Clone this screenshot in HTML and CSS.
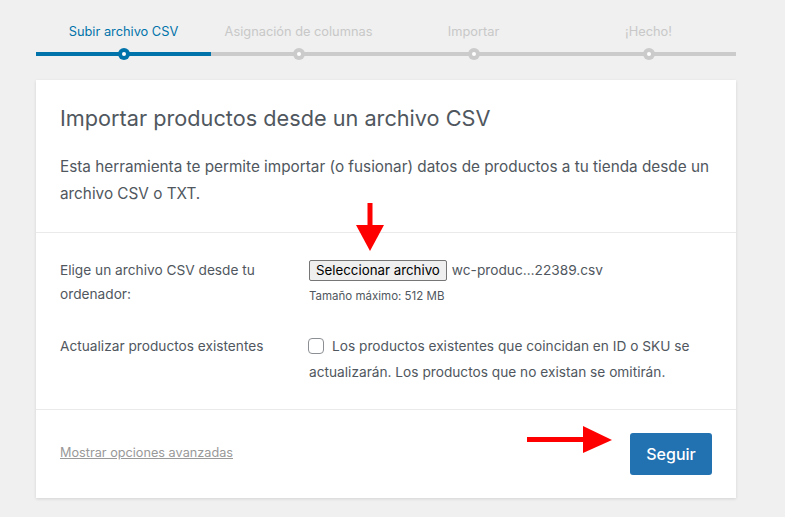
FILE: index.html
```html
<!DOCTYPE html>
<html lang="es">
<head>
<meta charset="utf-8">
<title>Importar productos</title>
<link rel="stylesheet" href="styles.css">
</head>
<body>
<div class="wrap">
  <ol class="steps">
    <li class="active">Subir archivo CSV</li>
    <li>Asignación de columnas</li>
    <li>Importar</li>
    <li>¡Hecho!</li>
  </ol>
  <form class="card">
    <header class="card-head">
      <h2>Importar productos desde un archivo CSV</h2>
      <p>Esta herramienta te permite importar (o fusionar) datos de productos a tu tienda desde un archivo CSV o TXT.</p>
    </header>
    <section class="card-body">
      <div class="row">
        <div class="label">Elige un archivo CSV desde tu ordenador:</div>
        <div class="field">
          <div class="file">
            <button type="button" class="file-btn">Seleccionar archivo</button>
            <span class="file-name">wc-produc…22389.csv</span>
          </div>
          <small class="hint">Tamaño máximo: 512 MB</small>
        </div>
      </div>
      <div class="row row-2">
        <div class="label">Actualizar productos existentes</div>
        <div class="field check-text"><span class="checkbox"></span>Los productos existentes que coincidan en ID o SKU se actualizarán. Los productos que no existan se omitirán.</div>
      </div>
    </section>
    <footer class="card-foot">
      <a class="adv" href="#">Mostrar opciones avanzadas</a>
      <button type="button" class="primary">Seguir</button>
    </footer>
    <svg class="arrow arrow-down" width="30" height="50" viewBox="0 0 30 50"><rect x="11.5" y="0" width="5" height="23" fill="#ff0000"/><polygon points="0,22 28,22 14,48" fill="#ff0000"/></svg>
    <svg class="arrow arrow-right" width="90" height="30" viewBox="0 0 90 30"><rect x="0" y="11" width="58" height="5" fill="#ff0000"/><polygon points="56,0 56,27 85,14" fill="#ff0000"/></svg>
  </form>
</div>
</body>
</html>
```

FILE: styles.css
```css
* { box-sizing: border-box; }
html, body { margin: 0; padding: 0; }
body {
  background: #f0f0f0;
  font-family: Inter, "Noto Sans", sans-serif;
  color: #50575e;
  width: 785px;
  height: 517px;
  overflow: hidden;
}
.wrap {
  width: 700px;
  margin-left: 36px;
  padding-top: 22px;
}
.steps {
  list-style: none;
  margin: 0;
  padding: 0;
  display: grid;
  grid-template-columns: repeat(4, 1fr);
}
.steps li {
  position: relative;
  text-align: center;
  font-size: 12.8px;
  line-height: 20px;
  color: #c8c8c8;
  padding-bottom: 10px;
  border-bottom: 4px solid #cbcbcb;
}
.steps li::after {
  content: "";
  position: absolute;
  left: 50%;
  bottom: -8px;
  width: 12px;
  height: 12px;
  margin-left: -6px;
  border-radius: 50%;
  background: #cbcbcb;
}
.steps li::before {
  content: "";
  position: absolute;
  left: 50%;
  bottom: -4px;
  width: 4px;
  height: 4px;
  margin-left: -2px;
  border-radius: 50%;
  background: #fff;
  z-index: 1;
}
.steps li.active {
  color: #0073aa;
  border-bottom-color: #0073aa;
}
.steps li.active::after { background: #0073aa; }

.card {
  position: relative;
  margin-top: 24px;
  background: #fff;
  box-shadow: 0 1px 3px rgba(0,0,0,0.12);
}
.card-head {
  padding: 24px 24px 25px;
  border-bottom: 1px solid #eaeaea;
}
.card-head h2 {
  margin: 0;
  font-size: 21.7px;
  font-weight: 400;
  line-height: 29px;
  color: #50575e;
}
.card-head p {
  margin: 20px 0 0;
  font-size: 15.3px;
  line-height: 27px;
  color: #50575e;
}
.card-body {
  padding: 25px 24px 24px;
  border-bottom: 1px solid #eaeaea;
}
.row {
  display: grid;
  grid-template-columns: 249px 1fr;
  font-size: 13.7px;
  line-height: 24px;
}
.row-2 { margin-top: 28px; }
.label { padding-right: 20px; color: #50575e; }
.file { display: flex; align-items: center; height: 24px; }
.file-btn {
  font-family: Inter, "Noto Sans", sans-serif;
  font-size: 13.3px;
  color: #000;
  height: 21px;
  padding: 0 6px;
  background: #efefef;
  border: 1px solid #767676;
  border-radius: 2px;
  line-height: 19px;
}
.file-name { margin-left: 5px; font-size: 13.7px; color: #50575e; }
.hint {
  display: block;
  margin-top: 6px;
  font-size: 11.5px;
  line-height: 16px;
  color: #50575e;
}
.check-text { line-height: 26px; margin-top: -1px; }
.checkbox {
  display: inline-block;
  width: 16px;
  height: 16px;
  border: 1px solid #8c8f94;
  border-radius: 4px;
  vertical-align: -3px;
  margin: 0 8px 0 -1px;
  background: #fff;
}
.card-foot {
  display: flex;
  align-items: center;
  justify-content: space-between;
  padding: 23px 24px;
}
.adv {
  font-size: 12.7px;
  color: #999;
  text-decoration: underline;
  margin-bottom: 4px;
}
.primary {
  font-family: Inter, "Noto Sans", sans-serif;
  width: 82px;
  height: 42px;
  border: 0;
  border-radius: 3px;
  background: #2271b1;
  color: #fff;
  font-size: 16px;
  font-weight: 500;
}
.arrow { position: absolute; }
.arrow-down { left: 320px; top: 123px; }
.arrow-right { left: 491px; top: 346px; }
```
